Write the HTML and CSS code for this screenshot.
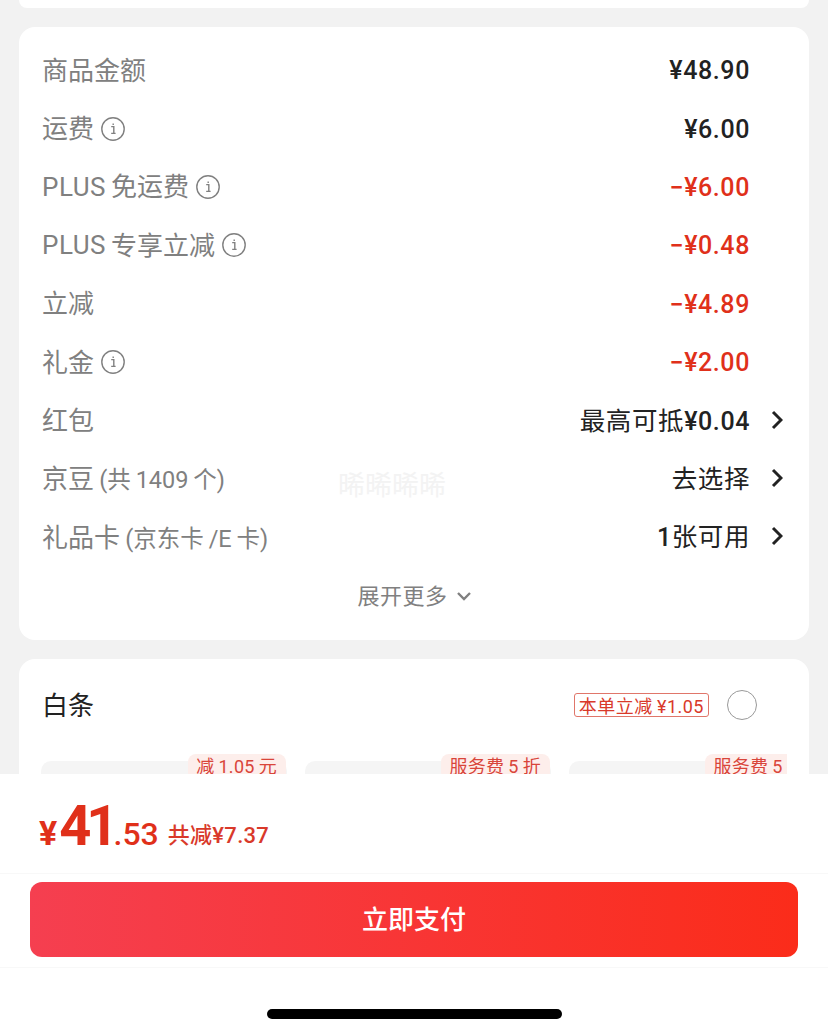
FILE: index.html
```html
<!DOCTYPE html>
<html lang="en">

<head>
    <meta charset="UTF-8">
    <meta name="viewport" content="width=device-width, initial-scale=1.0">
    <title>Document</title>
    <link rel="stylesheet" href="styles.css">
</head>

<body>
    <div class="scroll">
        <div class="card top-card"></div>

        <div class="card price-card">
            <div class="row">
                <div class="label"><span>商品金额</span></div>
                <div class="val">¥48.90</div>
                <div class="slot"></div>
            </div>
            <div class="row">
                <div class="label"><span>运费</span>
                    <svg class="info" viewBox="0 0 24 24"><circle cx="12" cy="12" r="11.2"/><path d="M10.2 9.6h2.6v6.6M10.2 16.4h4.4M12.2 6.4v1.6"/></svg>
                </div>
                <div class="val">¥6.00</div>
                <div class="slot"></div>
            </div>
            <div class="row">
                <div class="label"><b class="latin">PLUS</b><span>免运费</span>
                    <svg class="info" viewBox="0 0 24 24"><circle cx="12" cy="12" r="11.2"/><path d="M10.2 9.6h2.6v6.6M10.2 16.4h4.4M12.2 6.4v1.6"/></svg>
                </div>
                <div class="val red">−¥6.00</div>
                <div class="slot"></div>
            </div>
            <div class="row">
                <div class="label"><b class="latin">PLUS</b><span>专享立减</span>
                    <svg class="info" viewBox="0 0 24 24"><circle cx="12" cy="12" r="11.2"/><path d="M10.2 9.6h2.6v6.6M10.2 16.4h4.4M12.2 6.4v1.6"/></svg>
                </div>
                <div class="val red">−¥0.48</div>
                <div class="slot"></div>
            </div>
            <div class="row">
                <div class="label"><span>立减</span></div>
                <div class="val red">−¥4.89</div>
                <div class="slot"></div>
            </div>
            <div class="row">
                <div class="label"><span>礼金</span>
                    <svg class="info" viewBox="0 0 24 24"><circle cx="12" cy="12" r="11.2"/><path d="M10.2 9.6h2.6v6.6M10.2 16.4h4.4M12.2 6.4v1.6"/></svg>
                </div>
                <div class="val red">−¥2.00</div>
                <div class="slot"></div>
            </div>
            <div class="row">
                <div class="label"><span>红包</span></div>
                <div class="val"><span class="cn">最高可抵</span>¥0.04</div>
                <div class="slot">
                    <svg class="arrow" viewBox="0 0 12 20"><path d="M2 2l8 8-8 8"/></svg>
                </div>
            </div>
            <div class="row">
                <div class="label"><span>京豆&thinsp;<small class="sub">(共&thinsp;1409&thinsp;个)</small></span></div>
                <div class="watermark">晞晞晞晞</div>
                <div class="val"><span class="cn">去选择</span></div>
                <div class="slot">
                    <svg class="arrow" viewBox="0 0 12 20"><path d="M2 2l8 8-8 8"/></svg>
                </div>
            </div>
            <div class="row">
                <div class="label"><span>礼品卡&thinsp;<small class="sub">(京东卡&thinsp;/E&thinsp;卡)</small></span></div>
                <div class="val">1<span class="cn">张可用</span></div>
                <div class="slot">
                    <svg class="arrow" viewBox="0 0 12 20"><path d="M2 2l8 8-8 8"/></svg>
                </div>
            </div>
            <div class="more"><span>展开更多</span>
                <svg class="more-arrow" viewBox="0 0 16 10"><path d="M2 2l6 6 6-6"/></svg>
            </div>
        </div>

        <div class="card pay-card">
            <div class="pay-head">
                <div class="pay-name">白条</div>
                <div class="pay-tag">本单立减&thinsp;¥1.05</div>
                <div class="radio"></div>
            </div>
            <div class="plans">
                <div class="plan"><span class="plan-badge">减&thinsp;1.05&thinsp;元</span></div>
                <div class="plan"><span class="plan-badge">服务费&thinsp;5&thinsp;折</span></div>
                <div class="plan"><span class="plan-badge">服务费&thinsp;5&thinsp;折</span></div>
            </div>
        </div>
    </div>

    <div class="footer">
        <div class="total">
            <span class="yen">¥</span><span class="big">41</span><span class="cents">.53</span>
            <span class="saved">共减¥7.37</span>
        </div>
        <div class="btn-wrap">
            <button class="pay-btn"><span class="pay-text">立即支付</span></button>
        </div>
        <div class="home-area">
            <div class="home-bar"></div>
        </div>
    </div>
</body>

</html>
```

FILE: styles.css
```css
* {
    box-sizing: border-box;
}

body {
    margin: 0;
    width: 828px;
    height: 1034px;
    overflow: hidden;
    background: #fff;
    font-family: Roboto, "Noto Sans CJK SC", sans-serif;
}

.scroll {
    height: 774px;
    overflow: hidden;
    background-color: #f2f2f2;
    padding: 0 19px;
}

.card {
    background-color: #fff;
    border-radius: 16px;
}

.top-card {
    height: 8px;
    border-radius: 0 0 16px 16px;
}

.price-card {
    margin-top: 19px;
    height: 613px;
    padding: 14px 22px 0 23px;
}

.row {
    height: 58.4px;
    display: flex;
    align-items: center;
    position: relative;
}

.label {
    flex: 1;
    display: flex;
    align-items: center;
    font-size: 26px;
    color: #808080;
    white-space: nowrap;
}

.label span {
    padding-bottom: 4px;
}

.sub {
    font-size: 23.5px;
}

.latin {
    margin-right: 5px;
    font-weight: 400;
    letter-spacing: 0.5px;
}

.info {
    width: 24px;
    height: 24px;
    margin-left: 7px;
    fill: none;
    stroke: #808080;
    stroke-width: 1.4;
}

.val {
    padding-top: 2px;
    font-size: 25px;
    line-height: 30px;
    font-weight: 500;
    color: #222;
    letter-spacing: 0.6px;
}

/* chinese part of a value is thinner than the digits */
.cn {
    font-weight: 400;
    font-size: 25.5px;
    line-height: 1;
}

.red {
    color: #e0301a;
}

.slot {
    width: 37px;
    display: flex;
    justify-content: flex-end;
}

.arrow {
    width: 12px;
    height: 20px;
    margin: 0 4px 2px 0;
    fill: none;
    stroke: #222;
    stroke-width: 3;
}

/* sits on top of the row, does not take space */
.watermark {
    position: absolute;
    left: 296px;
    top: 14px;
    font-size: 27px;
    color: #f3f3f3;
}

.more {
    height: 58px;
    display: flex;
    justify-content: center;
    align-items: center;
    font-size: 22px;
    color: #808080;
    letter-spacing: 0.5px;
}

.more span {
    padding-bottom: 4px;
}

.more-arrow {
    width: 16px;
    height: 10px;
    margin-left: 8px;
    fill: none;
    stroke: #808080;
    stroke-width: 2.4;
}

.pay-card {
    margin-top: 19px;
    height: 200px;
    padding: 0 22px;
}

.pay-head {
    height: 92px;
    display: flex;
    align-items: center;
}

.pay-name {
    flex: 1;
    margin-left: 1px;
    padding-bottom: 4px;
    font-size: 26px;
    color: #222;
}

.pay-tag {
    height: 24px;
    padding: 0 4px;
    display: flex;
    align-items: center;
    border: 1px solid #e0766a;
    border-radius: 3px;
    font-size: 18px;
    letter-spacing: 0.5px;
    color: #d9392a;
}

.radio {
    width: 30px;
    height: 30px;
    margin: 0 30px 0 18px;
    border: 1px solid #999;
    border-radius: 50%;
}

.plans {
    height: 60px;
    padding-top: 10px;
    display: flex;
    gap: 18px;
    overflow: hidden;
}

.plan {
    flex: 0 0 246px;
    height: 60px;
    position: relative;
    background-color: #f5f5f5;
    border-radius: 10px;
}

.plan-badge {
    position: absolute;
    top: -7px;
    right: 1px;
    height: 26px;
    padding: 0 9px 5px 8px;
    display: flex;
    align-items: center;
    background-color: #fdeeeb;
    border-radius: 8px 8px 0 8px;
    font-size: 18px;
    letter-spacing: 0.3px;
    color: #d9453a;
}

.footer {
    height: 260px;
    background-color: #fff;
}

.total {
    height: 100px;
    padding: 19px 0 0 39px;
    display: flex;
    align-items: baseline;
    border-bottom: 1px solid #f8f8f8;
    color: #e0301a;
    font-weight: 500;
}

.yen {
    font-size: 34px;
    font-weight: 700;
    margin-right: 2px;
}

.big {
    font-size: 56px;
    font-weight: 700;
    letter-spacing: -5px;
}

.cents {
    font-size: 32px;
}

.saved {
    position: relative;
    top: -2px;
    margin-left: 9px;
    font-size: 22px;
    font-weight: 500;
    letter-spacing: 0.3px;
    color: #d9392a;
}

.btn-wrap {
    height: 94px;
    padding: 8px 30px 0;
    border-bottom: 1px solid #f8f8f8;
}

.pay-btn {
    width: 100%;
    height: 75px;
    border: 0;
    border-radius: 12px;
    background: linear-gradient(to right, #f53f50, #fb2c1a);
    color: #fff;
    font-family: inherit;
    font-size: 26px;
    font-weight: 500;
}

.pay-text {
    position: relative;
    top: -2px;
}

.home-area {
    padding-top: 41px;
}

.home-bar {
    width: 295px;
    height: 10px;
    margin: 0 auto;
    background-color: #000;
    border-radius: 5px;
}
```
